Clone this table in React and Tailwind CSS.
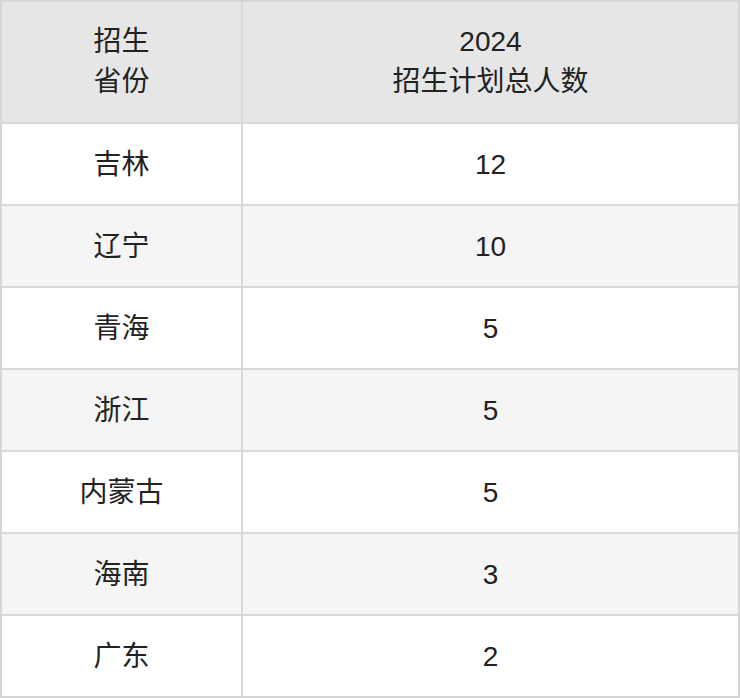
import React from 'react';

const rows = [
  ['吉林', '12'],
  ['辽宁', '10'],
  ['青海', '5'],
  ['浙江', '5'],
  ['内蒙古', '5'],
  ['海南', '3'],
  ['广东', '2'],
];

const App = () => {
  return (
    <div
      className="w-[740px] bg-white text-[#222] text-[28px] leading-[38px]"
      style={{ fontFamily: '"Liberation Sans", "Noto Sans CJK SC", sans-serif' }}
    >
      <div className="grid grid-cols-[239px_495px] gap-[2px] border-2 border-[#d6d6d6] bg-[#d9d9d9]">
        {/* Header */}
        <div className="h-[120px] bg-[#e6e6e6] flex items-center justify-center text-center leading-[40px]">
          招生<br />省份
        </div>
        <div className="h-[120px] bg-[#e6e6e6] flex items-center justify-center text-center leading-[40px]">
          2024<br />招生计划总人数
        </div>

        {/* Rows */}
        {rows.map(([province, total], i) => {
          const bg = i % 2 === 0 ? 'bg-white' : 'bg-[#f5f5f5]';
          return (
            <React.Fragment key={province}>
              <div className={`h-[80px] ${bg} flex items-center justify-center pt-[2px]`}>{province}</div>
              <div className={`h-[80px] ${bg} flex items-center justify-center pt-[2px]`}>{total}</div>
            </React.Fragment>
          );
        })}
      </div>
    </div>
  );
};

export default App;
